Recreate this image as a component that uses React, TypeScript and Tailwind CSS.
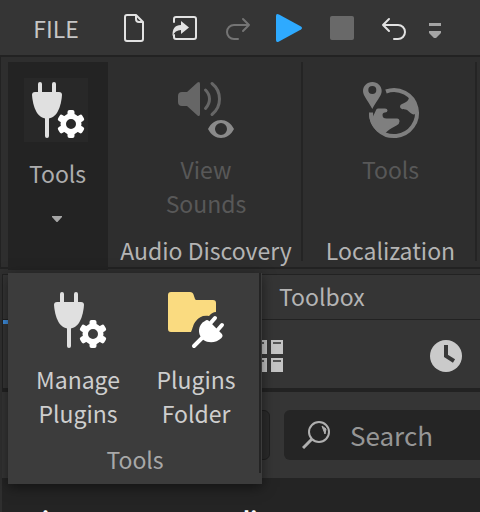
/**
 * Studio ribbon with the Tools menu open over the toolbox panel.
 */
import { useState } from 'react'
import type { ReactNode } from 'react'

const GEAR_TOOTH = 'M43.500 37.500V34q0-2 2-2h3q2 0 2 2v3.500z'

function PlugGearIcon() {
  return (
    <svg className="size-16" viewBox="0 0 64 64">
      <g fill="#e0e0e0">
        <rect x="14" y="4" width="4" height="14" rx="2" />
        <rect x="28" y="4" width="4" height="14" rx="2" />
        <path d="M11 14h24q3 0 3 3c-.3 5-1.600 12-4.500 17C31 38 28 40.500 23 40.500S15 38 12.500 34C9.600 29 8.300 22 8 17q0-3 3-3z" />
        <rect x="21" y="36" width="4" height="24" rx="2" />
      </g>
      <g fill="#fff">
        <path
          fillRule="evenodd"
          d="M47 35.500a10.500 10.500 0 1 0 0 21 10.500 10.500 0 1 0 0-21zm0 5.500a5 5 0 1 1 0 10 5 5 0 1 1 0-10z"
        />
        {[0, 60, 120, 180, 240, 300].map(a => (
          <path key={a} d={GEAR_TOOTH} transform={`rotate(${a} 47 46)`} />
        ))}
      </g>
    </svg>
  )
}

function PluginsFolderIcon() {
  return (
    <svg className="size-16" viewBox="0 0 64 64">
      <path
        d="M7 4h19c2 0 3 1 3.500 2.500L31 11q.4 1 1.500 1H49q3 0 3 3v9c-3 0-4 1-7 4-6-1-10 1-13 5-3 3-3 7-5 11H7q-3 0-3-3V7q0-3 3-3z"
        fill="#fadb80"
      />
      <g stroke="#fff" strokeLinecap="round" strokeWidth="4">
        <path d="M30 58l9-9M44 38l7-8M51 45l7-8" />
      </g>
      <path
        d="M41 33q2-2 4 0l13 13q1.500 2-.5 4c-5 5-13 5.500-18 2-5-4-6.500-12-1-17.500z"
        fill="#fff"
      />
    </svg>
  )
}

function SoundEyeIcon() {
  return (
    <svg className="size-16" viewBox="0 0 64 64" fill="none">
      <path d="M8 14h5L23.500 4.500Q26 3 26 6v30q0 3-2.500 1.500L13 28H8q-4 0-4-4v-6q0-4 4-4z" fill="#666" />
      <path
        d="M31.500 12q4 4 4 9t-4 9.500M38 5.500q7.500 6 7.500 15.500T38 36.500"
        stroke="#666"
        strokeWidth="3"
        strokeLinecap="round"
      />
      <path
        fillRule="evenodd"
        d="M34 51c3-6 8-9 13-9s10 3 13 9c-3 6-8 9-13 9s-10-3-13-9zm13-6a6 6 0 1 0 0 12 6 6 0 1 0 0-12z"
        fill="#8a8a8a"
      />
    </svg>
  )
}

function GlobePinIcon() {
  return (
    <svg className="size-16" viewBox="0 0 64 64" fill="#7f7f7f">
      <path
        fillRule="evenodd"
        d="M13.300 4C8 4 4 8 4 13c0 5 6 11 9.300 18C16.600 24 22.700 18 22.700 13c0-5-4-9-9.400-9zm0 4a4 4 0 1 1 0 8 4 4 0 1 1 0-8z"
      />
      <path
        d="M27 13.500A23 23 0 1 1 12 34.500"
        fill="none"
        stroke="#7f7f7f"
        strokeWidth="4"
      />
      <path d="M50 19c0 3-2 5-7 7-2 1-2.500 2.500-1.500 4 1 1.500 3 1 5 1.500 3 .5 4 4 8 5l4-1c0-8-3-13-8.500-16.500z" />
      <path d="M10 34.500L13.300 40l4-8.500q.5-1 2-1H26q2.500 0 2.500 2 0 2-2.500 2-2.500 0-2.500 2.500 0 3.500 4 3.500H38q2.500 0 2.500 3 0 2.500-3 4-8 4-10.500 7L25 57C15 53 10 45 10 34.500z" />
    </svg>
  )
}

function QuickButton({ label, children }: { label: string; children: ReactNode }) {
  return (
    <button aria-label={label} className="flex w-[52px] shrink-0 justify-center">
      <svg className="size-8" viewBox="0 0 32 32" fill="none" stroke="#e2e2e2" strokeWidth="2" strokeLinecap="round" strokeLinejoin="round">
        {children}
      </svg>
    </button>
  )
}

function QuickAccessBar() {
  return (
    <header className="flex h-[57px] items-center overflow-hidden border-b-2 border-[#222222] bg-[#353535]">
      <button className="w-[108px] shrink-0 pl-1 text-[#c6c6c6]">FILE</button>
      <QuickButton label="New">
        <path d="M18 3H9Q7 3 7 5v22q0 2 2 2h14q2 0 2-2V10zv4q0 3 3 3h4" />
      </QuickButton>
      <QuickButton label="Open">
        <path d="M4 10V7q0-2 2-2h18q2 0 2 2v18q0 2-2 2H6q-2 0-2-2v-2" />
        <path d="M11 9l8 6.500L11 22v-4q-6 0-8.500 6Q2 13 11 13z" fill="#e2e2e2" stroke="none" />
      </QuickButton>
      <QuickButton label="Redo">
        <path d="M16 27h-4a7 7 0 0 1 0-14h15M21 7l6 6-6 6" stroke="#747474" />
      </QuickButton>
      <QuickButton label="Run">
        <path d="M2 4q0-3 3-1.500l22 12q2 1.500 0 3l-22 12Q2 31 2 28z" fill="#2eaaff" stroke="none" />
      </QuickButton>
      <QuickButton label="Stop">
        <rect x="4" y="4" width="24" height="24" rx="2" fill="#696969" stroke="none" />
      </QuickButton>
      <QuickButton label="Undo">
        <path d="M16 27h4a7 7 0 0 0 0-14H5M11 7l-6 6 6 6" />
      </QuickButton>
      <button aria-label="Customize" className="flex w-[30px] shrink-0 justify-center pt-1">
        <svg className="size-4" viewBox="0 0 16 16" fill="#a4a4a4">
          <path d="M2 1h12v3H2zM2 9h12v2l-5 5H7L2 11z" />
        </svg>
      </button>
    </header>
  )
}

function RibbonGroup({ title, label, icon }: { title: string; label: string; icon: ReactNode }) {
  return (
    <section className="mb-[6px] flex shrink-0 flex-col items-center border-r-2 border-[#242424] pt-4 pl-[3px]">
      <button disabled className="flex w-24 flex-col items-center text-[#585858]">
        {icon}
        <span className="pt-[10px]">{label}</span>
      </button>
      <h2 className="mt-auto leading-[22px] text-[#b4b4b4]">{title}</h2>
    </section>
  )
}

function MenuItem({ label, icon }: { label: string; icon: ReactNode }) {
  return (
    <button role="menuitem" className="flex w-[118px] flex-col items-center">
      {icon}
      <span className="w-24 pt-[10px]">{label}</span>
    </button>
  )
}

function ToolsMenu() {
  return (
    <div role="menu" className="absolute top-full left-0 z-10 mt-[3px] w-[254px] bg-[#3c3c3c] pr-px pb-[11px] text-[#cecece] shadow-[0_3px_12px_#00000080]">
      <div className="h-[200px] border-r-2 border-[#242424] pt-[15px] pl-[11px]">
        <div className="flex">
          <MenuItem label="Manage Plugins" icon={<PlugGearIcon />} />
          <MenuItem label="Plugins Folder" icon={<PluginsFolderIcon />} />
        </div>
        <p className="pt-3 pr-2 text-center text-[#a8a8a8]">Tools</p>
      </div>
    </div>
  )
}

function Ribbon() {
  const [open, setOpen] = useState(true)

  return (
    <div className="flex h-[212px] border-b-2 border-l border-[#222222] bg-[#2e2e2e] pt-[5px] pl-[7px]">
      <div className="relative -mb-[3px] w-[100px] shrink-0">
        <button
          aria-expanded={open}
          onClick={() => setOpen(!open)}
          className="flex h-full w-full flex-col items-center bg-[#232323] pt-4 pr-1 text-[#adadad]"
        >
          <span className="bg-[#282828]">
            <PlugGearIcon />
          </span>
          <span className="pt-[14px] pl-[3px]">Tools</span>
          <svg className="mt-[26px] ml-[2px] h-[6px] w-[10px]" viewBox="0 0 10 6" fill="#a6a6a6">
            <path d="M0 0h10v1L5.500 6h-1L0 1z" />
          </svg>
        </button>
        {open && <ToolsMenu />}
      </div>
      <div className="flex min-w-0 overflow-hidden *:first:w-[195px] *:last:w-[174px]">
        <RibbonGroup title="Audio Discovery" label="View Sounds" icon={<SoundEyeIcon />} />
        <RibbonGroup title="Localization" label="Tools" icon={<GlobePinIcon />} />
      </div>
    </div>
  )
}

function Toolbox() {
  return (
    <div className="mt-[5px] ml-[2px] overflow-hidden bg-[#353535]">
      <div className="border-t border-l border-[#222222]">
        <h2 className="h-[45px] border-b border-[#222222] pt-1 pl-[276px] text-[#b4b4b4]">Toolbox</h2>
        <div className="flex h-[68px] *:flex *:w-[177px] *:shrink-0 *:justify-center *:pt-5">
          <button aria-label="Models" className="border-t-4 border-[#3f8fe0]" />
          <button aria-label="Inventory">
            <svg className="size-8" viewBox="0 0 32 32">
              <path d="M0 0h14v14H0zM18 0h12v14H18zM0 18h14v14H0zM18 18h12v14H18z" fill="#c4c4c4" />
              <path d="M3 3h8M20 3h8M3 21h8M20 21h8" stroke="#555" strokeWidth="2" />
            </svg>
          </button>
          <button aria-label="Recent">
            <svg className="size-8" viewBox="0 0 32 32">
              <circle cx="16" cy="16" r="16" fill="#cacaca" />
              <path d="M16 5v11l8 5" fill="none" stroke="#383838" strokeWidth="4" />
            </svg>
          </button>
        </div>
      </div>
      <div className="flex h-[90px] gap-[14px] border-t-4 border-[#222222] pt-[18px] pl-4">
        <select aria-label="Category" className="h-[50px] w-[252px] shrink-0 appearance-none rounded-md border border-[#1f1f1f] bg-[#2b2b2b]" />
        <label className="flex h-[50px] min-w-0 flex-1 items-center gap-5 rounded-l-md bg-[#252525] pl-[18px]">
          <svg className="size-7 shrink-0" viewBox="0 0 28 28" fill="none" stroke="#b0b0b0" strokeWidth="2">
            <circle cx="17" cy="11" r="10" />
            <path d="M10 18L1 27" strokeWidth="3" />
            <path d="M20 5l4 3-1 5z" fill="#b0b0b0" strokeWidth="1" />
          </svg>
          <input aria-label="Search" placeholder="Search" className="w-full min-w-0 bg-transparent text-[26px] outline-none placeholder:text-[#969696]" />
        </label>
      </div>
      <div className="flex gap-[194px] bg-[#242424] pt-6 pl-10 font-bold text-white">
        <span>i</span>
        <span>li</span>
      </div>
    </div>
  )
}

export default function App() {
  return (
    <div className="h-screen overflow-hidden bg-[#2f2f2f] font-['Noto_Sans_CJK_SC',sans-serif] text-[23px] leading-[34px]">
      <QuickAccessBar />
      <Ribbon />
      <Toolbox />
    </div>
  )
}
